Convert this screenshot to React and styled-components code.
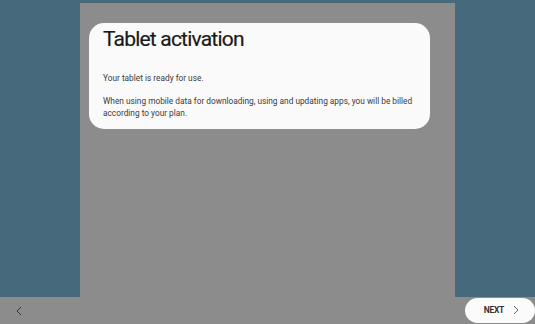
import React from "react";
import styled, { createGlobalStyle } from "styled-components";

const Global = createGlobalStyle`
  html, body, #root {
    margin: 0;
    padding: 0;
    width: 100%;
    height: 100%;
  }
  body {
    font-family: Roboto, "Noto Sans", sans-serif;
    overflow: hidden;
  }
`;

const Screen = styled.div`
  width: 535px;
  height: 324px;
  display: flex;
  flex-direction: column;
  background-color: #466a7b;
`;

const Stage = styled.div`
  flex: 1;
  display: flex;
  justify-content: center;
  padding-top: 3px;
`;

const Panel = styled.div`
  width: 375px;
  background-color: #8c8c8c;
  padding: 20px 25px 0 9px;
  box-sizing: border-box;
`;

const Card = styled.div`
  background-color: #fafafa;
  border-radius: 15px;
  height: 106px;
  box-sizing: border-box;
  padding: 3px 6px 0 14px;
  color: #222;
`;

const Title = styled.h1`
  margin: 0;
  font-size: 21px;
  font-weight: 400;
  line-height: 26px;
  letter-spacing: -0.8px;
  color: #1a1a1a;
  -webkit-text-stroke: 0.2px #1a1a1a;
`;

const Body = styled.p`
  margin: ${(p) => (p.$first ? "20px" : "11px")} 0 0 0;
  font-size: 8.3px;
  line-height: 12px;
  color: #3a3a3a;
`;

const BottomBar = styled.div`
  height: 27px;
  background-color: #8c8c8c;
  display: flex;
  align-items: center;
  justify-content: space-between;
  padding-left: 14px;
`;

const BackButton = styled.button`
  border: none;
  background: none;
  padding: 0;
  width: 10px;
  height: 14px;
  display: flex;
  align-items: center;
  justify-content: center;
`;

const NextButton = styled.button`
  width: 70px;
  height: 25px;
  border: none;
  border-radius: 13px;
  background-color: #fbfbfb;
  display: flex;
  align-items: center;
  justify-content: flex-end;
  gap: 9px;
  padding: 0 16px 0 0;
  margin-top: -1px;
  font-family: Roboto, sans-serif;
  font-size: 8.5px;
  font-weight: 700;
  color: #333;
  letter-spacing: -0.3px;
`;

const Chevron = ({ dir }) => (
  <svg width="6" height="10" viewBox="0 0 6 10">
    <path
      d={dir === "left" ? "M5 1 L1 5 L5 9" : "M1 1 L5 5 L1 9"}
      fill="none"
      stroke={dir === "left" ? "#333" : "#666"}
      strokeWidth="1"
    />
  </svg>
);

export default function App() {
  return (
    <>
      <Global />
      <Screen>
        <Stage>
          <Panel>
            <Card>
              <Title>Tablet activation</Title>
              <Body $first>Your tablet is ready for use.</Body>
              <Body>
                When using mobile data for downloading, using and updating apps,
                you will be billed according to your plan.
              </Body>
            </Card>
          </Panel>
        </Stage>
        <BottomBar>
          <BackButton>
            <Chevron dir="left" />
          </BackButton>
          <NextButton>
            NEXT
            <Chevron dir="right" />
          </NextButton>
        </BottomBar>
      </Screen>
    </>
  );
}
